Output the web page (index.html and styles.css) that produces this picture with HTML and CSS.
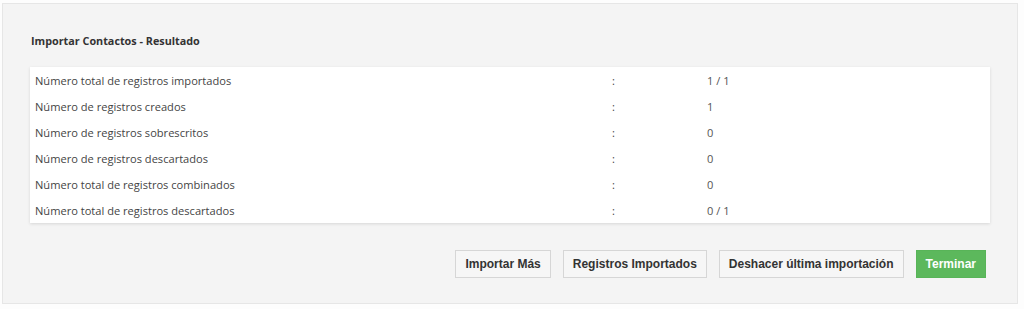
FILE: index.html
```html
<!DOCTYPE html>
<html lang="es">
<head>
    <meta charset="UTF-8">
    <title>Importar Contactos - Resultado</title>
    <link rel="stylesheet" href="styles.css">
</head>
<body>

<div class="panel">
    <h2 class="panel-title">Importar Contactos - Resultado</h2>

    <!-- Result summary -->
    <div class="result-box">
        <div class="result-row">
            <span>Número total de registros importados</span>
            <span>:</span>
            <span>1 / 1</span>
        </div>
        <div class="result-row">
            <span>Número de registros creados</span>
            <span>:</span>
            <span>1</span>
        </div>
        <div class="result-row">
            <span>Número de registros sobrescritos</span>
            <span>:</span>
            <span>0</span>
        </div>
        <div class="result-row">
            <span>Número de registros descartados</span>
            <span>:</span>
            <span>0</span>
        </div>
        <div class="result-row">
            <span>Número total de registros combinados</span>
            <span>:</span>
            <span>0</span>
        </div>
        <div class="result-row">
            <span>Número total de registros descartados</span>
            <span>:</span>
            <span>0 / 1</span>
        </div>
    </div>

    <!-- Actions -->
    <div class="actions">
        <button class="btn" type="button">Importar Más</button>
        <button class="btn" type="button">Registros Importados</button>
        <button class="btn" type="button">Deshacer última importación</button>
        <button class="btn btn-success" type="button">Terminar</button>
    </div>
</div>

</body>
</html>
```

FILE: styles.css
```css
/* Page */
body {
    margin: 0;
    background: #fdfdfd;
    font-family: "Open Sans", Arial, sans-serif;
    color: #333;
}

/* Outer panel */
.panel {
    margin: 3px 6px 5px 2px;
    height: 301px;
    box-sizing: border-box;
    background: #f4f4f4;
    border: 1px solid #e6e6e6;
    padding: 29px 27px 0 27px;
}

/* Title */
.panel-title {
    margin: 0 0 18px 1px;
    font-size: 10.8px;
    line-height: 16px;
    font-weight: bold;
    color: #333;
}

/* Result box */
.result-box {
    background: #fff;
    box-shadow: 0 1px 3px rgba(0, 0, 0, 0.12);
}

.result-row {
    display: grid;
    grid-template-columns: 577px 95px 1fr;
    padding-left: 5px;
    height: 26px;
    align-items: center;
    font-size: 11.1px;
    color: #444;
}

.result-row span:last-child {
    color: #555;
}

/* Buttons */
.actions {
    display: flex;
    justify-content: flex-end;
    gap: 12px;
    margin-top: 27px;
    padding-right: 4px;
}

.btn {
    font-family: "Liberation Sans", Arial, sans-serif;
    font-size: 12px;
    font-weight: bold;
    line-height: 15px;
    padding: 6px 9px 5px;
    color: #333;
    background: #f6f6f6;
    border: 1px solid #d6d6d6;
    border-radius: 0;
    cursor: pointer;
}

.btn:hover {
    background: #ececec;
}

.btn-success {
    color: #fff;
    background: #5cb85c;
    border-color: #58b458;
}

.btn-success:hover {
    background: #4cae4c;
}
```
